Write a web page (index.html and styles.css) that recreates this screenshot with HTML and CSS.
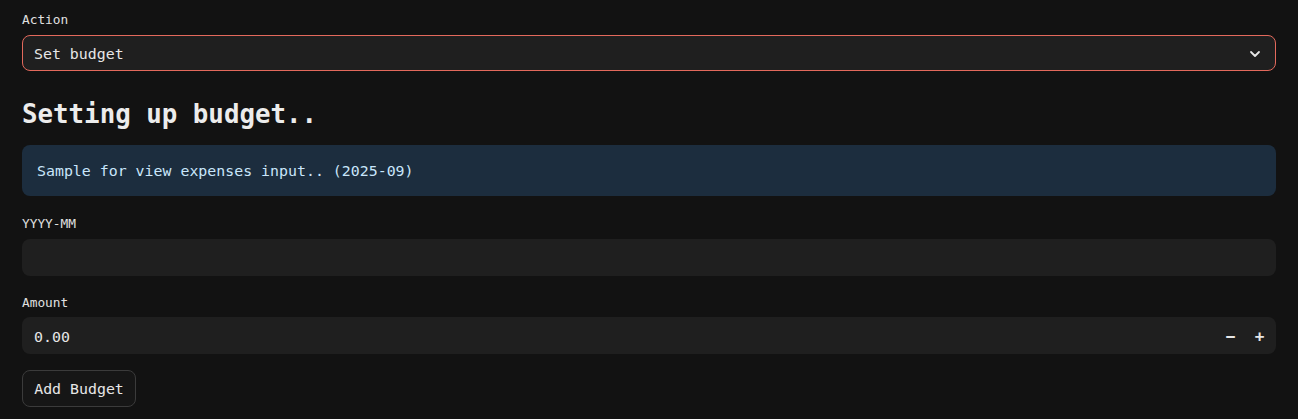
FILE: index.html
```html
<!DOCTYPE html>
<html>
<head>
<meta charset="utf-8">
<link rel="stylesheet" href="styles.css">
</head>
<body>
<main class="page">
  <label class="label">Action</label>
  <div class="select">
    <span>Set budget</span>
    <svg class="chev" width="12" height="8" viewBox="0 0 12 8"><path d="M2 2 L6 6 L10 2" fill="none" stroke="#e6e6e6" stroke-width="1.8" stroke-linecap="round" stroke-linejoin="round"/></svg>
  </div>
  <h2 class="heading">Setting up budget..</h2>
  <div class="info">Sample for view expenses input.. (2025-09)</div>
  <label class="label label-gap">YYYY-MM</label>
  <div class="input"></div>
  <label class="label label-gap label-tight">Amount</label>
  <div class="input number">
    <span>0.00</span>
    <div class="steps">
      <span class="step">&minus;</span>
      <span class="step">+</span>
    </div>
  </div>
  <button class="btn">Add Budget</button>
</main>
</body>
</html>
```

FILE: styles.css
```css
html, body {
  margin: 0;
  background: #121212;
}
.page {
  font-family: "DejaVu Sans Mono", "Liberation Mono", monospace;
  color: #e6e6e6;
  padding: 9px 22px 0 22px;
  display: flex;
  flex-direction: column;
  align-items: stretch;
}
.label {
  font-size: 12.8px;
  line-height: 22px;
  margin-bottom: 4px;
  color: #e0e0e0;
}
.label-gap {
  margin-top: 17px;
  margin-bottom: 4px;
}
.label-tight {
  margin-top: 16px;
  margin-bottom: 3px;
}
.select {
  height: 36px;
  box-sizing: border-box;
  border: 1px solid #e3695c;
  border-radius: 8px;
  background: #1f1f1f;
  display: flex;
  align-items: center;
  justify-content: space-between;
  padding: 2px 14px 0 11px;
  font-size: 14.9px;
}
.heading {
  margin: 25px 0 13px 0;
  font-size: 25.8px;
  line-height: 36px;
  font-weight: bold;
  color: #ececec;
}
.info {
  height: 51px;
  box-sizing: border-box;
  background: #1c2d3e;
  border-radius: 8px;
  padding: 1px 15px 0 15px;
  display: flex;
  align-items: center;
  font-size: 14.9px;
  color: #c9e6fb;
}
.input {
  height: 36px;
  background: #1f1f1f;
  border-radius: 8px;
  display: flex;
  align-items: center;
  justify-content: space-between;
  padding: 1px 0 0 12px;
  font-size: 14.9px;
}
.number {
  height: 37px;
  box-sizing: border-box;
  padding-top: 2px;
}
.steps {
  display: flex;
  height: 100%;
  padding-right: 2px;
}
.step {
  width: 29px;
  display: flex;
  align-items: center;
  justify-content: center;
  font-size: 16px;
  font-weight: bold;
  color: #e6e6e6;
}
.btn {
  margin-top: 16px;
  align-self: flex-start;
  height: 37px;
  width: 114px;
  box-sizing: border-box;
  background: #161616;
  border: 1px solid #3b3b3b;
  border-radius: 8px;
  color: #e6e6e6;
  font-family: "DejaVu Sans Mono", "Liberation Mono", monospace;
  font-size: 14.9px;
  padding: 0;
}
```
